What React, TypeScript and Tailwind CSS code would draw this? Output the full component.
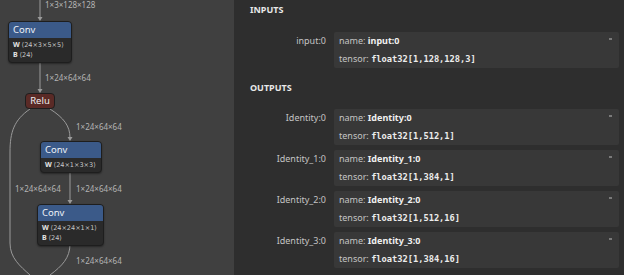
import React from "react";

const inputs = [{ name: "input:0", type: "float32[1,128,128,3]" }];
const outputs = [
  { name: "Identity:0", type: "float32[1,512,1]" },
  { name: "Identity_1:0", type: "float32[1,384,1]" },
  { name: "Identity_2:0", type: "float32[1,512,16]" },
  { name: "Identity_3:0", type: "float32[1,384,16]" },
];

const sans = "font-['Noto_Sans','Open_Sans',sans-serif]";
const mono = "font-['DejaVu_Sans_Mono','Liberation_Mono',monospace]";

function Arrow({ x, y }: { x: number; y: number }) {
  return <polygon points={`${x - 2.5},${y - 4} ${x + 2.5},${y - 4} ${x},${y}`} fill="#9a9a9a" />;
}

function EdgeLabel({ x, y, text }: { x: number; y: number; text: string }) {
  return (
    <div className="absolute whitespace-nowrap text-[8px] leading-[10px] text-[#b4b4b4]" style={{ left: x, top: y }}>
      {text}
    </div>
  );
}

function ConvNode({ x, y, w, weights }: { x: number; y: number; w: number; weights: string[][] }) {
  return (
    <div
      className="absolute rounded-[4px] border border-[#1e1e1e] bg-[#2a2a2a] overflow-hidden shadow-[0_1px_2px_rgba(0,0,0,0.4)]"
      style={{ left: x, top: y, width: w }}
    >
      <div className="h-[16px] bg-[#3b5a89] px-[4px] text-[9.5px] leading-[16px] text-[#eef2f8]">Conv</div>
      <div className="flex flex-col px-[4px] py-[2px]">
        {weights.map(([k, v]) => (
          <div key={k} className="whitespace-nowrap text-[7px] leading-[10px] text-[#c9c9c9]">
            <span className="font-bold text-[#e6e6e6]">{k}</span>{" "}
            <span className="font-['DejaVu_Sans',sans-serif] text-[6.5px]">{v}</span>
          </div>
        ))}
      </div>
    </div>
  );
}

function Graph() {
  return (
    <div className={`relative h-[275px] w-[234px] shrink-0 bg-[#404040] ${sans}`}>
      <svg className="absolute left-0 top-0" width="234" height="275" fill="none" stroke="#9a9a9a" strokeWidth="1">
        <path d="M40 0 L40 18" />
        <path d="M40 61 L40 90" />
        <path d="M30 109 C 14 120, 10 132, 10 152 L10 243 C 10 258, 20 266, 30 275" />
        <path d="M50 109 C 64 118, 70 126, 70 138" />
        <path d="M70 172 L70 201" />
        <path d="M70 244 C 70 258, 62 266, 50 275" />
        <g stroke="none">
          <Arrow x={40} y={21} />
          <Arrow x={40} y={93} />
          <Arrow x={70} y={141} />
          <Arrow x={70} y={204} />
        </g>
      </svg>
      <EdgeLabel x={45} y={0} text="1×3×128×128" />
      <EdgeLabel x={45} y={73} text="1×24×64×64" />
      <EdgeLabel x={76} y={122} text="1×24×64×64" />
      <EdgeLabel x={15} y={184} text="1×24×64×64" />
      <EdgeLabel x={76} y={184} text="1×24×64×64" />
      <EdgeLabel x={76} y={256} text="1×24×64×64" />
      <ConvNode x={8} y={21} w={64} weights={[["W", "⟨24×3×5×5⟩"], ["B", "⟨24⟩"]]} />
      <div className="absolute left-[25px] top-[93px] h-[16px] w-[30px] rounded-[4px] border border-[#1e1e1e] bg-[#5a2a26] text-center text-[9.5px] leading-[14px] text-[#eee]">
        Relu
      </div>
      <ConvNode x={40} y={141} w={62} weights={[["W", "⟨24×1×3×3⟩"]]} />
      <ConvNode x={37} y={204} w={67} weights={[["W", "⟨24×24×1×1⟩"], ["B", "⟨24⟩"]]} />
    </div>
  );
}

function Row({ name, type }: { name: string; type: string }) {
  return (
    <div className="flex">
      <div className="w-[100px] shrink-0 pr-[8px] pt-[3px] text-right text-[9px] leading-[12px] text-[#c4c4c4]">{name}</div>
      <div className="relative h-[36px] w-[285px] rounded-[2px] bg-[#383838]">
        <div className="h-[18px] px-[5px] text-[9px] leading-[18px] text-[#c4c4c4]">
          name: <span className="font-bold text-[#f0f0f0]">{name}</span>
        </div>
        <div className="h-[18px] px-[5px] text-[9px] leading-[18px] text-[#c4c4c4]">
          tensor: <span className={`${mono} font-bold text-[8.7px] text-[#ececec]`}>{type}</span>
        </div>
        <div className="absolute right-[7px] top-[6px] h-[2px] w-[3px] bg-[#7a7a7a]" />
      </div>
    </div>
  );
}

export default function App() {
  return (
    <div className="flex h-[275px] w-[624px] overflow-hidden bg-[#2e2e2e]">
      <Graph />
      <div className={`flex-1 ${sans}`}>
        <div className="h-[20px] pl-[16px] text-[9px] font-bold leading-[20px] text-[#e8e8e8]">INPUTS</div>
        <div className="mt-[12px] flex flex-col gap-[5px]">
          {inputs.map((r) => (
            <Row key={r.name} {...r} />
          ))}
        </div>
        <div className="mt-[10px] h-[20px] pl-[16px] text-[9px] font-bold leading-[20px] text-[#e8e8e8]">OUTPUTS</div>
        <div className="mt-[11px] flex flex-col gap-[5px]">
          {outputs.map((r) => (
            <Row key={r.name} {...r} />
          ))}
        </div>
      </div>
    </div>
  );
}
